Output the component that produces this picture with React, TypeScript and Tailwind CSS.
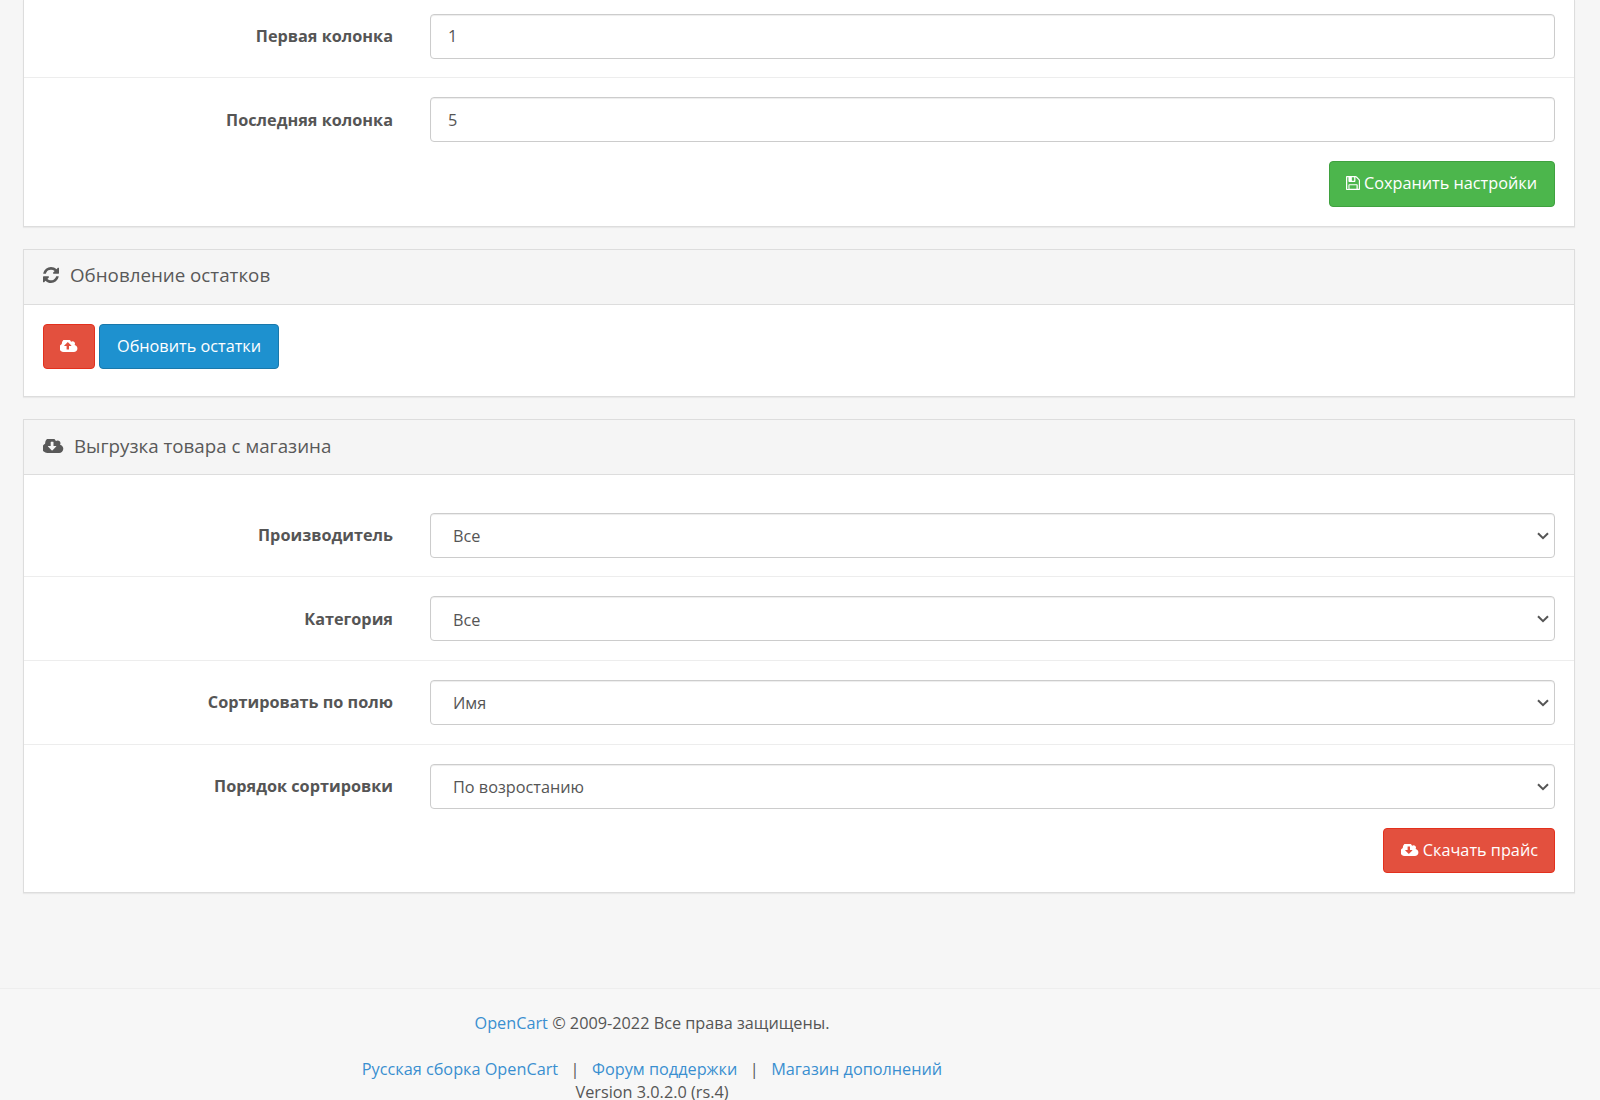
const SYNC =
  "M1639 1056q0 5-1 7-64 268-268 434.5t-478 166.5q-146 0-282.5-55t-243.5-157l-129 129q-19 19-45 19t-45-19-19-45v-448q0-26 19-45t45-19h448q26 0 45 19t19 45-19 45l-137 137q71 66 161 102t187 36q134 0 250-65t186-179q11-17 53-117 8-23 30-23h192q13 0 22.5 9.5t9.5 22.5zm25-800v448q0 26-19 45t-45 19h-448q-26 0-45-19t-19-45 19-45l138-138q-148-137-349-137-134 0-250 65t-186 179q-11 17-53 117-8 23-30 23h-199q-13 0-22.5-9.5t-9.5-22.5v-7q65-268 270-434.5t480-166.5q146 0 284 55.5t245 156.5l130-129q19-19 45-19t45 19 19 45z";
const SAVE =
  "M512 1536h768v-384h-768v384zm896 0h128v-896q0-14-10-34t-20-30l-281-281q-10-10-29.5-20t-34.5-10v416q0 40-28 68t-68 28h-576q-40 0-68-28t-28-68v-416h-128v1280h128v-416q0-40 28-68t68-28h832q40 0 68 28t28 68v416zm-384-928v-320q0-13-9.5-22.5t-22.5-9.5h-192q-13 0-22.5 9.5t-9.5 22.5v320q0 13 9.5 22.5t22.5 9.5h192q13 0 22.5-9.5t9.5-22.5zm640 32v928q0 40-28 68t-68 28h-1344q-40 0-68-28t-28-68v-1344q0-40 28-68t68-28h928q40 0 88 20t76 48l280 280q28 28 48 76t20 88z";
const UP =
  "M1216 864q0-14-9-23l-352-352q-9-9-23-9t-23 9l-351 351q-10 12-10 24 0 14 9 23t23 9h224v352q0 13 9.5 22.5t22.5 9.5h192q13 0 22.5-9.5t9.5-22.5v-352h224q13 0 22.5-9.5t9.5-22.5zm640 288q0 159-112.5 271.5t-271.5 112.5h-1088q-185 0-316.5-131.5t-131.5-316.5q0-130 70-240t188-165q-2-30-2-43 0-212 150-362t362-150q156 0 285.5 87t188.5 231q71-62 166-62 106 0 181 75t75 181q0 76-41 138 130 31 213.5 135.5t83.5 238.5z";
const DOWN =
  "M1216 928q0-14-9-23t-23-9h-224v-352q0-13-9.5-22.5t-22.5-9.5h-192q-13 0-22.5 9.5t-9.5 22.5v352h-224q-13 0-22.5 9.5t-9.5 22.5q0 14 9 23l352 352q9 9 23 9t23-9l351-351q10-12 10-24zm640 224q0 159-112.5 271.5t-271.5 112.5h-1088q-185 0-316.5-131.5t-131.5-316.5q0-130 70-240t188-165q-2-30-2-43 0-212 150-362t362-150q156 0 285.5 87t188.5 231q71-62 166-62 106 0 181 75t75 181q0 76-41 138 130 31 213.5 135.5t83.5 238.5z";

function Icon({ d, box, className }: { d: string; box: string; className: string }) {
  return (
    <svg viewBox={box} fill="currentColor" className={className}>
      <path d={d} />
    </svg>
  );
}

function InputRow({ label, value, first }: { label: string; value: string; first?: boolean }) {
  return (
    <div className={`flex items-center gap-[37px] px-[19px] ${first ? "pt-[14px] pb-[18px] border-b border-[#ededed]" : "pt-[19px]"}`}>
      <label className={`w-[350px] text-right font-bold text-[16.25px] leading-[23px] ${first ? "" : "pt-[1px]"}`}>{label}</label>
      <input
        readOnly
        value={value}
        className={`flex-1 h-[45px] rounded-[4px] border border-[#cccccc] bg-white px-[17px] text-[16.25px] text-[#555555] shadow-[inset_0_1px_1px_rgba(0,0,0,0.075)] ${first ? "pb-[2px]" : ""}`}
      />
    </div>
  );
}

function SelectRow({ label, value, last, drop, rowPad }: { label: string; value: string; last?: boolean; drop?: boolean; rowPad: string }) {
  return (
    <div className={`flex items-center gap-[37px] px-[19px] ${rowPad} ${last ? "" : "border-b border-[#ededed]"}`}>
      <label className={`w-[350px] text-right font-bold text-[16.25px] leading-[23px] ${drop ? "pt-[1px]" : ""}`}>{label}</label>
      <div className="relative flex-1">
        <select
          value={value}
          onChange={() => {}}
          className={`block w-full h-[45px] appearance-none rounded-[4px] border border-[#cccccc] bg-white pl-[22px] pr-[17px] text-[16.25px] text-[#555555] shadow-[inset_0_1px_1px_rgba(0,0,0,0.075)] ${drop ? "pt-[4px]" : "pt-[2px]"}`}
        >
          <option>{value}</option>
        </select>
        <svg viewBox="0 0 12 8" className="absolute right-[6px] top-[19px] w-[12px] h-[8px] text-[#555555] pointer-events-none" fill="none" stroke="currentColor" strokeWidth="2">
          <path d="M1 1.2 6 6.2 11 1.2" />
        </svg>
      </div>
    </div>
  );
}

function Heading({ icon, title, pad }: { icon: React.ReactNode; title: string; pad: string }) {
  return (
    <div className={`flex items-center h-[55px] px-[19px] bg-[#f5f5f5] border-b border-[#dddddd] text-[18.75px] text-[#595959] ${pad}`}>
      {icon}
      <span>{title}</span>
    </div>
  );
}

export default function App() {
  return (
    <div
      className="h-[1100px] overflow-hidden bg-[#f6f6f6] text-[#555555] text-[16.25px] leading-[23px]"
      style={{ fontFamily: '"Open Sans", "Noto Sans", sans-serif' }}
    >
      <div className="mx-[23px] w-[1552px]">
        <section className="bg-white border-x border-b border-[#dddddd] shadow-[0_1px_1px_rgba(0,0,0,0.05)] h-[227px]">
          <InputRow first label="Первая колонка" value="1" />
          <InputRow label="Последняя колонка" value="5" />
          <div className="flex justify-end mt-[19px] px-[19px]">
            <button className="flex items-center gap-[4px] h-[46px] pl-[16px] pr-[17px] pb-[2px] rounded-[4px] border border-[#3fa13f] bg-[#4cb64c] text-white text-[16.25px]">
              <Icon d={SAVE} box="128 128 1536 1536" className="w-[14px] h-[14px]" />
              Сохранить настройки
            </button>
          </div>
        </section>

        <section className="mt-[22px] bg-white border border-[#dddddd] shadow-[0_1px_1px_rgba(0,0,0,0.05)]">
          <Heading icon={<Icon d={SYNC} box="128 128 1536 1536" className="w-[16px] h-[16px]" />} title="Обновление остатков" pad="gap-[11px] pb-[5px]" />
          <div className="flex gap-[4px] px-[19px] pt-[19px] pb-[27px]">
            <button className="flex items-center justify-center w-[52px] h-[45px] rounded-[4px] border border-[#e3301d] bg-[#e3503e] text-white pb-[2px]">
              <Icon d={UP} box="0 256 1920 1280" className="w-[18px] h-[12px]" />
            </button>
            <button className="h-[45px] px-[17px] rounded-[4px] border border-[#1978ab] bg-[#1e91cf] text-white text-[16.25px]">
              Обновить остатки
            </button>
          </div>
        </section>

        <section className="mt-[22px] bg-white border border-[#dddddd] shadow-[0_1px_1px_rgba(0,0,0,0.05)]">
          <Heading icon={<Icon d={DOWN} box="0 256 1920 1280" className="w-[21px] h-[14px] shrink-0" />} title="Выгрузка товара с магазина" pad="gap-[10px] pb-[3px]" />
          <div className="pb-[19px] pt-[19px]">
            <SelectRow label="Производитель" value="Все" rowPad="pt-[18.8px] pb-[18px]" />
            <SelectRow drop label="Категория" value="Все" rowPad="pt-[19.6px] pb-[18.8px]" />
            <SelectRow label="Сортировать по полю" value="Имя" rowPad="pt-[18.8px] pb-[18.8px]" />
            <SelectRow last label="Порядок сортировки" value="По возростанию" rowPad="pt-[18.8px]" />
            <div className="flex justify-end mt-[19px] px-[19px]">
              <button className="flex items-center gap-[4px] h-[45px] pl-[17px] pr-[16px] rounded-[4px] border border-[#e3301d] bg-[#e3503e] text-white text-[16.25px]">
                <Icon d={DOWN} box="0 256 1920 1280" className="w-[18px] h-[12px]" />
                Скачать прайс
              </button>
            </div>
          </div>
        </section>
      </div>

      <footer className="mt-[95px] border-t border-[#eeeeee] bg-[#f7f7f7] pt-[23px] h-[200px]">
        <div className="w-[1304px] text-center">
          <p className="mb-[23px]">
            <a className="text-[#3a8fd0]">OpenCart</a> © 2009-2022 Все права защищены.
          </p>
          <p>
            <a className="text-[#3a8fd0]">Русская сборка OpenCart</a>
            <span className="mx-[12.5px]">|</span>
            <a className="text-[#3a8fd0]">Форум поддержки</a>
            <span className="mx-[12.5px]">|</span>
            <a className="text-[#3a8fd0]">Магазин дополнений</a>
          </p>
          <p>Version 3.0.2.0 (rs.4)</p>
        </div>
      </footer>
    </div>
  );
}
